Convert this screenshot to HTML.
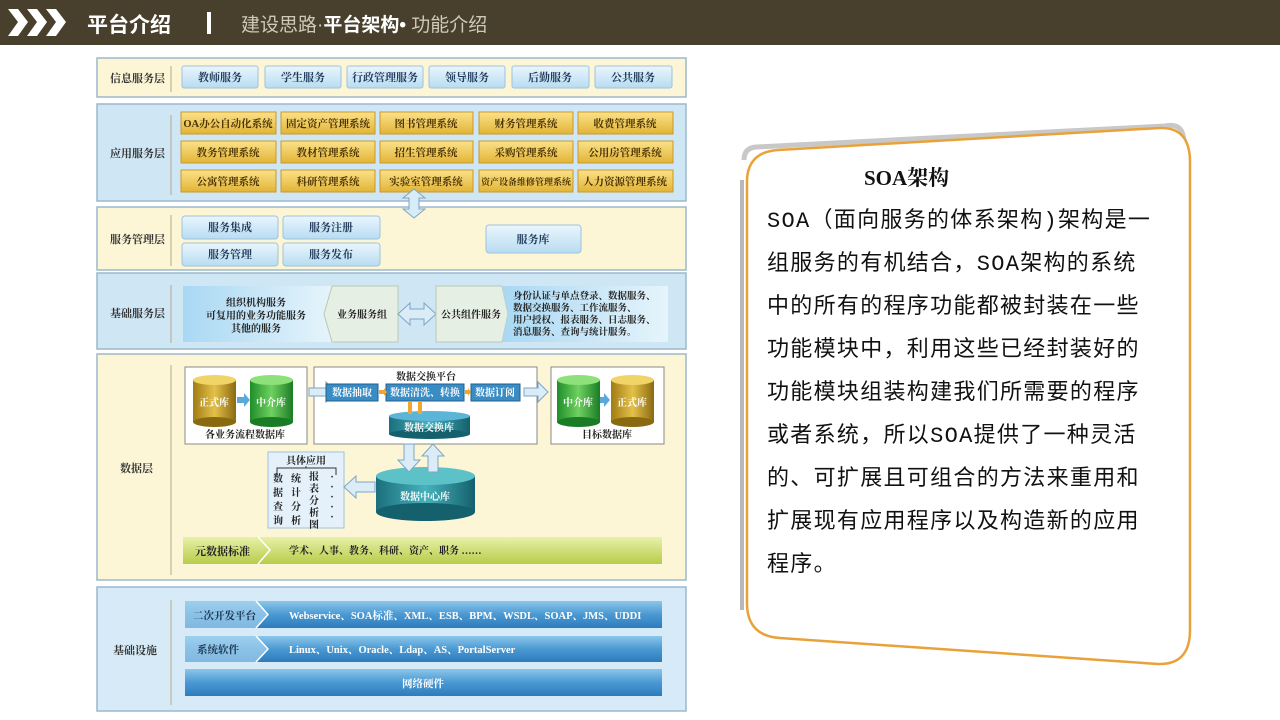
<!DOCTYPE html>
<html><head><meta charset="utf-8"><style>
*{margin:0;padding:0;box-sizing:border-box}
body{width:1280px;height:720px;background:#fff;position:relative;overflow:hidden;font-family:"Liberation Sans","Noto Sans CJK SC",sans-serif}
.hdr{position:absolute;left:0;top:0;width:1280px;height:45px;background:#483f2c}
.a{position:absolute}
.card{position:absolute;left:767px;font-size:22px;letter-spacing:1.3px;color:#111;line-height:43px;font-family:"Liberation Mono","Noto Sans CJK SC",sans-serif}
</style></head><body>
<div class="hdr"></div>
<svg class="a" style="left:0;top:0" width="1280" height="720" font-family="Liberation Serif, Noto Serif CJK SC, serif">
<defs>
<linearGradient id="gold" x1="0" y1="0" x2="0" y2="1"><stop offset="0" stop-color="#fbe18a"/><stop offset="1" stop-color="#e2b437"/></linearGradient>
<linearGradient id="lb" x1="0" y1="0" x2="0" y2="1"><stop offset="0" stop-color="#eaf6fd"/><stop offset="1" stop-color="#b8dcf2"/></linearGradient>
<linearGradient id="bb" x1="0" y1="0" x2="0" y2="1"><stop offset="0" stop-color="#8cc6ea"/><stop offset=".5" stop-color="#4a99d2"/><stop offset="1" stop-color="#2e7bbd"/></linearGradient>
<linearGradient id="gr" x1="0" y1="0" x2="0" y2="1"><stop offset="0" stop-color="#e8f1a8"/><stop offset="1" stop-color="#b7cc4a"/></linearGradient>
<linearGradient id="fb" x1="0" y1="0" x2="1" y2="0"><stop offset="0" stop-color="#a9d8f3"/><stop offset="1" stop-color="#e6f4fb"/></linearGradient>
<linearGradient id="cy1" x1="0" y1="0" x2="1" y2="0"><stop offset="0" stop-color="#a07c12"/><stop offset=".5" stop-color="#e4c04a"/><stop offset="1" stop-color="#8a6a10"/></linearGradient>
<linearGradient id="cy2" x1="0" y1="0" x2="1" y2="0"><stop offset="0" stop-color="#1f8e2a"/><stop offset=".5" stop-color="#6fd160"/><stop offset="1" stop-color="#1a7c24"/></linearGradient>
<linearGradient id="cy3" x1="0" y1="0" x2="1" y2="0"><stop offset="0" stop-color="#1b6f7c"/><stop offset=".5" stop-color="#46b2bd"/><stop offset="1" stop-color="#14606c"/></linearGradient>
</defs>
<g fill="#fff"><path d="M8 9 L18 9 L28 22 L18 36 L8 36 L18 22Z"/><path d="M27 9 L37 9 L47 22 L37 36 L27 36 L37 22Z"/><path d="M46 9 L56 9 L66 22 L56 36 L46 36 L56 22Z"/></g>
<text x="87" y="32" fill="#fff" font-size="21" font-weight="bold" font-family="Liberation Sans, Noto Sans CJK SC, sans-serif">平台介绍</text>
<rect x="207" y="12" width="4" height="22" fill="#fff"/>
<text x="241" y="31" fill="#cfcab8" font-size="19" font-family="Liberation Sans, Noto Sans CJK SC, sans-serif">建设思路·<tspan fill="#fff" font-weight="bold">平台架构•</tspan> 功能介绍</text>

<g stroke="#9cb8cc" stroke-width="1.5">
<rect x="97" y="58" width="589" height="39" fill="#fdf6d6"/>
<rect x="97" y="104" width="589" height="97" fill="#cfe6f5"/>
<rect x="97" y="207" width="589" height="63" fill="#fdf6d6"/>
<rect x="97" y="273" width="589" height="76" fill="#cfe6f5"/>
<rect x="97" y="354" width="589" height="226" fill="#fdf6d6"/>
<rect x="97" y="587" width="589" height="124" fill="#d6ebf7"/>
</g>
<g font-size="11" fill="#333" font-weight="bold">
<text x="110" y="82">信息服务层</text><text x="110" y="157">应用服务层</text><text x="110" y="243">服务管理层</text><text x="110" y="317">基础服务层</text><text x="120" y="472">数据层</text><text x="113" y="654">基础设施</text>
</g>
<g stroke="#b5a98a" stroke-width="1"><line x1="171" y1="66" x2="171" y2="92"/><line x1="171" y1="115" x2="171" y2="195"/><line x1="171" y1="215" x2="171" y2="266"/><line x1="171" y1="285" x2="171" y2="343"/><line x1="171" y1="365" x2="171" y2="575"/><line x1="171" y1="600" x2="171" y2="705"/></g>
<g fill="url(#lb)" stroke="#9fc3dc">
<rect x="182" y="66" width="76" height="22" rx="2"/><rect x="265" y="66" width="76" height="22" rx="2"/><rect x="347" y="66" width="76" height="22" rx="2"/><rect x="429" y="66" width="76" height="22" rx="2"/><rect x="512" y="66" width="77" height="22" rx="2"/><rect x="595" y="66" width="77" height="22" rx="2"/></g>
<g font-size="11" fill="#1f3a5a" text-anchor="middle" font-weight="bold">
<text x="220" y="81">教师服务</text><text x="303" y="81">学生服务</text><text x="385" y="81">行政管理服务</text><text x="467" y="81">领导服务</text><text x="550" y="81">后勤服务</text><text x="633" y="81">公共服务</text></g>
<g fill="url(#gold)" stroke="#c9982a">
<rect x="181" y="112" width="95" height="22"/><rect x="281" y="112" width="94" height="22"/><rect x="380" y="112" width="93" height="22"/><rect x="479" y="112" width="94" height="22"/><rect x="578" y="112" width="95" height="22"/>
<rect x="181" y="141" width="95" height="22"/><rect x="281" y="141" width="94" height="22"/><rect x="380" y="141" width="93" height="22"/><rect x="479" y="141" width="94" height="22"/><rect x="578" y="141" width="95" height="22"/>
<rect x="181" y="170" width="95" height="22"/><rect x="281" y="170" width="94" height="22"/><rect x="380" y="170" width="93" height="22"/><rect x="479" y="170" width="94" height="22"/><rect x="578" y="170" width="95" height="22"/></g>
<g font-size="10.5" fill="#4a3200" text-anchor="middle" font-weight="bold">
<text x="228" y="127">OA办公自动化系统</text><text x="328" y="127">固定资产管理系统</text><text x="426" y="127">图书管理系统</text><text x="526" y="127">财务管理系统</text><text x="625" y="127">收费管理系统</text>
<text x="228" y="156">教务管理系统</text><text x="328" y="156">教材管理系统</text><text x="426" y="156">招生管理系统</text><text x="526" y="156">采购管理系统</text><text x="625" y="156">公用房管理系统</text>
<text x="228" y="185">公寓管理系统</text><text x="328" y="185">科研管理系统</text><text x="426" y="185">实验室管理系统</text><text x="526" y="185" font-size="9">资产设备维修管理系统</text><text x="625" y="185">人力资源管理系统</text></g>
<path d="M414 189 L425 198 L419 198 L419 209 L425 209 L414 218 L403 209 L409 209 L409 198 L403 198Z" fill="#d8ecf8" stroke="#7aa6c6"/>
<g fill="url(#lb)" stroke="#9fc3dc">
<rect x="182" y="216" width="96" height="23" rx="3"/><rect x="283" y="216" width="97" height="23" rx="3"/><rect x="182" y="243" width="96" height="23" rx="3"/><rect x="283" y="243" width="97" height="23" rx="3"/><rect x="486" y="225" width="95" height="28" rx="3"/></g>
<g font-size="11" fill="#1f3a5a" text-anchor="middle" font-weight="bold">
<text x="230" y="231">服务集成</text><text x="331" y="231">服务注册</text><text x="230" y="258">服务管理</text><text x="331" y="258">服务发布</text><text x="533" y="243">服务库</text></g>
<path d="M183 286 L332 286 L324 314 L332 342 L183 342Z" fill="url(#fb)"/>
<path d="M332 286 L398 286 L398 342 L332 342 L324 314Z" fill="#e6efe3" stroke="#b9c8b4"/>
<path d="M398 314 L410 303 L410 309 L424 309 L424 303 L436 314 L424 325 L424 319 L410 319 L410 325Z" fill="#dcecf7" stroke="#7aa6c6"/>
<path d="M436 286 L502 286 L508 314 L502 342 L436 342Z" fill="#e6efe3" stroke="#b9c8b4"/>
<path d="M502 286 L668 286 L668 342 L502 342 L508 314Z" fill="url(#fb)"/>
<g font-size="10" fill="#222" text-anchor="middle" font-weight="bold">
<text x="256" y="306">组织机构服务</text><text x="256" y="319">可复用的业务功能服务</text><text x="256" y="332">其他的服务</text>
<text x="362" y="318">业务服务组</text><text x="471" y="318">公共组件服务</text></g>
<g font-size="9.5" fill="#222" font-weight="bold">
<text x="513" y="299">身份认证与单点登录、数据服务、</text><text x="513" y="311">数据交换服务、工作流服务、</text><text x="513" y="323">用户授权、报表服务、日志服务、</text><text x="513" y="335">消息服务、查询与统计服务。</text></g>
<g fill="#fff" stroke="#8a8a8a"><rect x="185" y="367" width="122" height="77"/><rect x="314" y="367" width="223" height="77"/><rect x="551" y="367" width="113" height="77"/><rect x="268" y="452" width="76" height="76" fill="#e4f1fa" stroke="#9fc3dc"/></g>
<g>
<rect x="193" y="380" width="43" height="42" fill="url(#cy1)"/><ellipse cx="214.5" cy="380" rx="21.5" ry="5" fill="#f0d468"/><ellipse cx="214.5" cy="422" rx="21.5" ry="5" fill="#8a6a10"/>
<rect x="250" y="380" width="43" height="42" fill="url(#cy2)"/><ellipse cx="271.5" cy="380" rx="21.5" ry="5" fill="#8ee07a"/><ellipse cx="271.5" cy="422" rx="21.5" ry="5" fill="#1a7c24"/>
<rect x="557" y="380" width="43" height="42" fill="url(#cy2)"/><ellipse cx="578.5" cy="380" rx="21.5" ry="5" fill="#8ee07a"/><ellipse cx="578.5" cy="422" rx="21.5" ry="5" fill="#1a7c24"/>
<rect x="611" y="380" width="43" height="42" fill="url(#cy1)"/><ellipse cx="632.5" cy="380" rx="21.5" ry="5" fill="#f0d468"/><ellipse cx="632.5" cy="422" rx="21.5" ry="5" fill="#8a6a10"/>
<rect x="389" y="416" width="81" height="18" fill="url(#cy3)"/><ellipse cx="429.5" cy="416" rx="40.5" ry="5" fill="#5ab5d8"/><ellipse cx="429.5" cy="434" rx="40.5" ry="5" fill="#14606c"/>
<rect x="376" y="476" width="99" height="36" fill="url(#cy3)"/><ellipse cx="425.5" cy="476" rx="49.5" ry="9" fill="#5dc2c8"/><ellipse cx="425.5" cy="512" rx="49.5" ry="9" fill="#14606c"/>
</g>
<g fill="#5ba9d8"><path d="M237 397 L244 397 L244 393 L250 400 L244 407 L244 403 L237 403Z"/><path d="M600 397 L604 397 L604 393 L610 400 L604 407 L604 403 L600 403Z"/></g>
<g fill="#dcecf7" stroke="#7aa6c6"><path d="M309 388 L326 388 L326 382 L336 392 L326 402 L326 396 L309 396Z"/><path d="M524 388 L538 388 L538 382 L548 392 L538 402 L538 396 L524 396Z"/>
<path d="M404 444 L414 444 L414 460 L420 460 L409 472 L398 460 L404 460Z"/><path d="M428 472 L438 472 L438 456 L444 456 L433 444 L422 456 L428 456Z"/>
<path d="M375 482 L356 482 L356 476 L344 487 L356 498 L356 492 L375 492Z"/></g>
<g fill="#3a8dc4" stroke="#21608f"><rect x="326" y="384" width="52" height="17"/><rect x="386" y="384" width="78" height="17"/><rect x="471" y="384" width="49" height="17"/></g>
<g fill="#f2a630"><path d="M379 390 L384 390 L384 388 L387 392 L384 396 L384 394 L379 394Z"/><path d="M465 390 L468 390 L468 388 L471 392 L468 396 L468 394 L465 394Z"/><rect x="408" y="402" width="4" height="12"/><rect x="418" y="402" width="4" height="12"/></g>
<g font-size="10" fill="#fff" font-weight="bold" text-anchor="middle">
<text x="352" y="396">数据抽取</text><text x="425" y="396">数据清洗、转换</text><text x="495" y="396">数据订阅</text>
<text x="214" y="406">正式库</text><text x="271" y="406">中介库</text><text x="578" y="406">中介库</text><text x="632" y="406">正式库</text>
<text x="429" y="431">数据交换库</text><text x="425" y="500">数据中心库</text></g>
<g font-size="10" fill="#222" font-weight="bold" text-anchor="middle">
<text x="426" y="380">数据交换平台</text><text x="245" y="438">各业务流程数据库</text><text x="607" y="438">目标数据库</text><text x="306" y="464">具体应用</text></g>
<path d="M277 475 L277 468 L336 468 L336 475 M306 468 L306 466" fill="none" stroke="#333"/>
<g font-size="10" fill="#222" font-weight="bold" text-anchor="middle">
<text x="278" y="482">数</text><text x="278" y="496">据</text><text x="278" y="510">查</text><text x="278" y="524">询</text>
<text x="296" y="482">统</text><text x="296" y="496">计</text><text x="296" y="510">分</text><text x="296" y="524">析</text>
<text x="314" y="480">报</text><text x="314" y="492">表</text><text x="314" y="504">分</text><text x="314" y="516">析</text><text x="314" y="528">图</text>
<text x="332" y="480">·</text><text x="332" y="490">·</text><text x="332" y="500">·</text><text x="332" y="510">·</text><text x="332" y="520">·</text></g>
<rect x="183" y="537" width="479" height="27" fill="url(#gr)"/>
<path d="M258 537 L270 550 L258 564" fill="none" stroke="#fff" stroke-width="1.5"/>
<text x="195" y="555" font-size="11" fill="#222" font-weight="bold">元数据标准</text>
<text x="289" y="554" font-size="10" fill="#222" font-weight="bold">学术、人事、教务、科研、资产、职务 ……</text>
<g fill="url(#bb)"><rect x="185" y="601" width="477" height="27"/><rect x="185" y="636" width="477" height="26"/><rect x="185" y="669" width="477" height="27"/></g>
<g fill="#a6d3f0" opacity=".7"><path d="M185 601 L256 601 L268 614.5 L256 628 L185 628Z"/><path d="M185 636 L256 636 L268 649 L256 662 L185 662Z"/></g>
<path d="M256 601 L268 614.5 L256 628 M256 636 L268 649 L256 662" fill="none" stroke="#fff" stroke-width="1.5"/>
<g font-size="10.5" fill="#fff" font-weight="bold">
<text x="193" y="619" fill="#1a3550">二次开发平台</text><text x="197" y="653" fill="#1a3550">系统软件</text>
<text x="289" y="619">Webservice、SOA标准、XML、ESB、BPM、WSDL、SOAP、JMS、UDDI</text>
<text x="289" y="653">Linux、Unix、Oracle、Ldap、AS、PortalServer</text>
<text x="423" y="687" text-anchor="middle">网络硬件</text></g>
<path d="M744 160 Q744 148 756 147 L1165 126 Q1180 123 1183 135 L1186 150" fill="none" stroke="#c8c8c8" stroke-width="5"/>
<path d="M742 180 L742 610" stroke="#b8b8b8" stroke-width="4"/>
<path d="M778 150 L1160 128 Q1189 127 1190 160 L1190 630 Q1190 665 1158 664 L780 638 Q748 636 747 605 L747 180 Q748 152 778 150Z" fill="#fff" stroke="#e9a23a" stroke-width="2.5"/>
</svg>
<div class="a" style="left:864px;top:162px;font-size:21px;font-weight:bold;font-family:'Liberation Serif','Noto Serif CJK SC',serif;color:#111">SOA架构</div>
<div class="card" style="top:200px">SOA（面向服务的体系架构)架构是一<br>组服务的有机结合，SOA架构的系统<br>中的所有的程序功能都被封装在一些<br>功能模块中，利用这些已经封装好的<br>功能模块组装构建我们所需要的程序<br>或者系统，所以SOA提供了一种灵活<br>的、可扩展且可组合的方法来重用和<br>扩展现有应用程序以及构造新的应用<br>程序。</div>
</body></html>
